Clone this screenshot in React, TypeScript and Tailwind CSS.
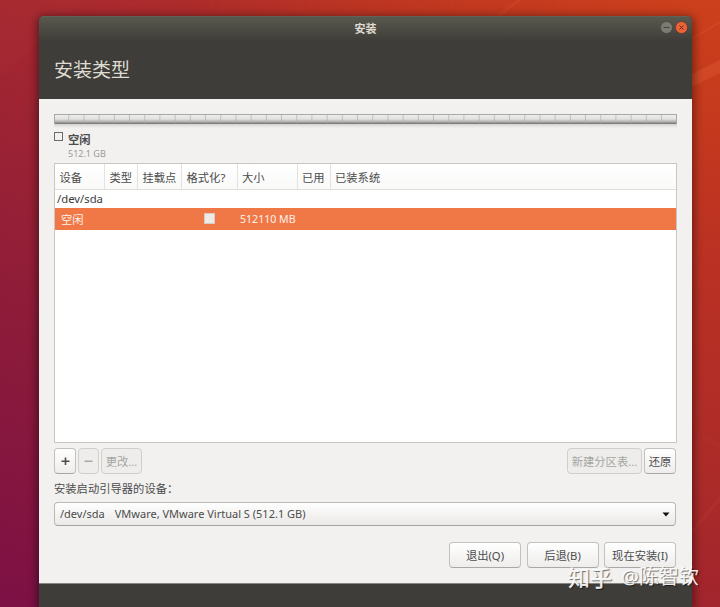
import clsx from "clsx";
import type { ReactNode } from "react";

const columns = [
  { label: "设备", width: "w-[50px]" },
  { label: "类型", width: "w-[33px]" },
  { label: "挂载点", width: "w-[44px]" },
  { label: "格式化?", width: "w-[55.5px]" },
  { label: "大小", width: "w-[60px]" },
  { label: "已用", width: "w-[33px]" },
  { label: "已装系统", width: "flex-1" },
];

function Button({
  children,
  className,
  disabled,
}: {
  children: ReactNode;
  className?: string;
  disabled?: boolean;
}) {
  return (
    <button
      disabled={disabled}
      className={clsx(
        "flex h-[26px] shrink-0 items-center justify-center rounded-[4px] border whitespace-nowrap",
        disabled
          ? "border-[#d0cfcd] bg-[#eeedec] text-[#a5a5a2]"
          : "border-[#c3c1be] border-b-[#aaa8a5] bg-linear-to-b from-white to-[#eeedeb] text-[#4c4c4c]",
        className,
      )}
    >
      {children}
    </button>
  );
}

function Wallpaper() {
  return (
    <svg
      className="absolute inset-0"
      width="720"
      height="607"
      viewBox="0 0 720 607"
    >
      <defs>
        <linearGradient
          id="base"
          gradientUnits="userSpaceOnUse"
          x1="0"
          y1="607"
          x2="300"
          y2="-50"
        >
          <stop offset="0" stopColor="#7d1045" />
          <stop offset="0.35" stopColor="#8c1b3a" />
          <stop offset="0.8" stopColor="#a8292f" />
          <stop offset="1" stopColor="#b53025" />
        </linearGradient>
        <linearGradient id="right" x1="0" y1="0" x2="0" y2="1">
          <stop offset="0" stopColor="#cc401d" />
          <stop offset="0.2" stopColor="#c5391e" />
          <stop offset="0.42" stopColor="#bb3123" />
          <stop offset="0.8" stopColor="#ab2b29" />
          <stop offset="1" stopColor="#a2242d" />
        </linearGradient>
        <linearGradient id="fade" x1="0" y1="0" x2="1" y2="0">
          <stop offset="0.25" stopColor="white" stopOpacity="0" />
          <stop offset="0.95" stopColor="white" />
        </linearGradient>
        <mask id="blend">
          <rect width="720" height="607" fill="url(#fade)" />
        </mask>
      </defs>
      <rect width="720" height="607" fill="url(#base)" />
      <rect width="720" height="607" fill="url(#right)" mask="url(#blend)" />
      <g fill="#ff8a50">
        <path d="M0 76L83 0H0Z" opacity="0.02" />
        <path d="M492 18L517 0H522L498 18Z" opacity="0.08" />
        <path d="M688 76L720 60V73L688 89Z" opacity="0.16" />
        <path d="M688 40L720 21V23L688 42Z" opacity="0.12" />
        <path d="M690 531L720 496V501L690 538Z" opacity="0.05" />
        <path d="M703 435L720 446V448L703 437Z" opacity="0.05" />
      </g>
    </svg>
  );
}

function TitleBar() {
  return (
    <div className="relative flex h-6 shrink-0 items-center justify-center bg-linear-to-b from-[#5b5a50] to-[#3f3e39] text-[11px] font-bold text-[#dfdbd2] shadow-[inset_0_1px_0_#626158]">
      安装
      <div className="absolute top-[5px] right-[4px] flex gap-[2px]">
        <svg width="13" height="13" viewBox="0 0 13 13">
          <circle cx="6.5" cy="6.5" r="6" fill="#7c7b73" stroke="#45443f" strokeWidth="0.7" />
          <path d="M3.5 6.5H9.5" stroke="#44433e" />
        </svg>
        <svg width="13" height="13" viewBox="0 0 13 13">
          <circle cx="6.5" cy="6.5" r="6" fill="#ec6337" stroke="#60382a" strokeWidth="0.7" />
          <path d="M4.5 4.5L8.5 8.5M8.5 4.5L4.5 8.5" stroke="#632b18" />
        </svg>
      </div>
    </div>
  );
}

function PartitionBar() {
  return (
    <svg className="block shrink-0" width="623" height="14" viewBox="0 0 623 14">
      <defs>
        <linearGradient id="bar" x1="0" y1="0" x2="0" y2="1">
          <stop offset="0" stopColor="#f0f0ef" />
          <stop offset="0.5" stopColor="#e2e2e1" />
          <stop offset="0.8" stopColor="#aaaaaa" />
          <stop offset="1" stopColor="#6c6c6c" />
        </linearGradient>
        <linearGradient id="reflection" x1="0" y1="0" x2="0" y2="1">
          <stop offset="0" stopColor="#d4d3d1" />
          <stop offset="1" stopColor="#f2f1f0" />
        </linearGradient>
        <pattern
          id="ticks"
          width="15.2"
          height="10"
          patternUnits="userSpaceOnUse"
        >
          <path d="M14.8 0V9" stroke="#aaa" strokeWidth="0.7" />
        </pattern>
      </defs>
      <rect width="623" height="10" fill="url(#bar)" />
      <rect width="623" height="10" fill="url(#ticks)" />
      <path d="M0 0.5H623M0.5 0V10M622.5 0V10" stroke="#a8a8a7" />
      <rect y="10" width="623" height="4" fill="url(#reflection)" />
    </svg>
  );
}

function PartitionTable() {
  return (
    <div className="flex h-[280px] w-[623px] shrink-0 flex-col border border-[#c9c7c4] bg-white">
      <div className="flex h-[26px] shrink-0 border-b border-[#dfdedc] bg-linear-to-b from-white to-[#f9f9f8]">
        {columns.map((column) => (
          <div
            key={column.label}
            className={clsx(
              "flex shrink-0 items-center border-r border-[#e3e2e0] pt-[2px] pl-[4.5px] whitespace-nowrap last:border-r-0",
              column.width,
            )}
          >
            {column.label}
          </div>
        ))}
      </div>
      <div className="flex h-[18px] shrink-0 items-center pl-[2px] text-[#3c3c3c]">
        /dev/sda
      </div>
      <div className="flex h-[22px] shrink-0 items-center bg-[#f07746] text-white/90">
        <span className="w-[149px] shrink-0 pt-px pl-[6px]">空闲</span>
        <span className="mr-[25px] mb-[2px] size-[11px] shrink-0 border border-[#d9cac4] bg-[#edeae8]" />
        <span className="text-[10.6px]">512110 MB</span>
      </div>
    </div>
  );
}

export default function App() {
  return (
    <main className="relative h-[607px] w-[720px] overflow-hidden pt-4 pl-[39px] font-['Noto_Sans','Noto_Sans_CJK_SC',sans-serif] text-[11.3px] leading-none text-[#4c4c4c]">
      <Wallpaper />

      <div className="relative flex h-[591px] w-[653px] flex-col overflow-hidden rounded-t-[5px] bg-[#3e3d39] shadow-[0_2px_10px_2px_rgba(0,0,0,0.45)]">
        <TitleBar />
        <h1 className="flex h-[59px] shrink-0 items-center pt-[2px] pl-[15px] text-[19px] text-[#dfdbd2]">
          安装类型
        </h1>

        <div className="flex h-[485px] shrink-0 flex-col border-b border-[#868580] bg-[#f2f1f0] px-[15px] pt-[15px]">
          <PartitionBar />

          {/* legend */}
          <div className="flex h-[35px] shrink-0 gap-[5px] pt-[4px]">
            <span className="size-[9px] border border-[#6b6b6a]" />
            <div className="pt-[2px]">
              <p className="font-bold">空闲</p>
              <p className="mt-[4px] text-[9px] text-[#9b9b98]">512.1 GB</p>
            </div>
          </div>

          <PartitionTable />

          <div className="mt-[5px] flex h-[26px] shrink-0 gap-[2px]">
            <Button className="w-[22px]">
              <svg width="9" height="9" viewBox="0 0 9 9">
                <path
                  d="M4.5 0.5V8M0.5 4.25H8.5"
                  stroke="currentColor"
                  strokeWidth="1.6"
                />
              </svg>
            </Button>
            <Button className="w-[21px]" disabled>
              <svg width="9" height="9" viewBox="0 0 9 9">
                <path d="M0.5 4.25H8.5" stroke="currentColor" strokeWidth="1.4" />
              </svg>
            </Button>
            <Button className="w-[41px] pt-[2px]" disabled>
              更改...
            </Button>
            <Button className="ml-auto w-[75px] pt-[2px]" disabled>
              新建分区表...
            </Button>
            <Button className="mr-px w-[32px] pt-[2px]">还原</Button>
          </div>

          <p className="mt-[9px] h-[19px] shrink-0">安装启动引导器的设备：</p>

          <div className="flex h-[24px] w-[622px] shrink-0 items-center justify-between rounded-[4px] border border-[#bbb9b6] border-b-[#a5a3a0] bg-linear-to-b from-white to-[#eae9e7] pr-[5px] pl-[5px] text-[11px]">
            <span className="flex gap-[10px] pb-[2px]">
              <span>/dev/sda</span>
              <span>VMware, VMware Virtual S (512.1 GB)</span>
            </span>
            <svg width="8" height="5" viewBox="0 0 8 5">
              <path d="M0.5 0.5H7.5L4 4.5Z" fill="#111" />
            </svg>
          </div>

          <div className="mt-[16px] mr-px flex justify-end gap-[5.5px]">
            <Button className="w-[72px] pt-px">退出(Q)</Button>
            <Button className="w-[72px] pt-px">后退(B)</Button>
            <Button className="w-[72px] pt-px">现在安装(I)</Button>
          </div>
        </div>
      </div>

      {/* watermark */}
      <div className="absolute top-[566px] left-[568px] flex gap-[9px] text-[20px] leading-[22px] whitespace-nowrap text-white/90 [text-shadow:1px_1px_1px_rgba(0,0,0,0.55)]">
        <span className="text-[22px] font-medium">知乎</span>
        <span>@陈智钦</span>
      </div>
    </main>
  );
}
